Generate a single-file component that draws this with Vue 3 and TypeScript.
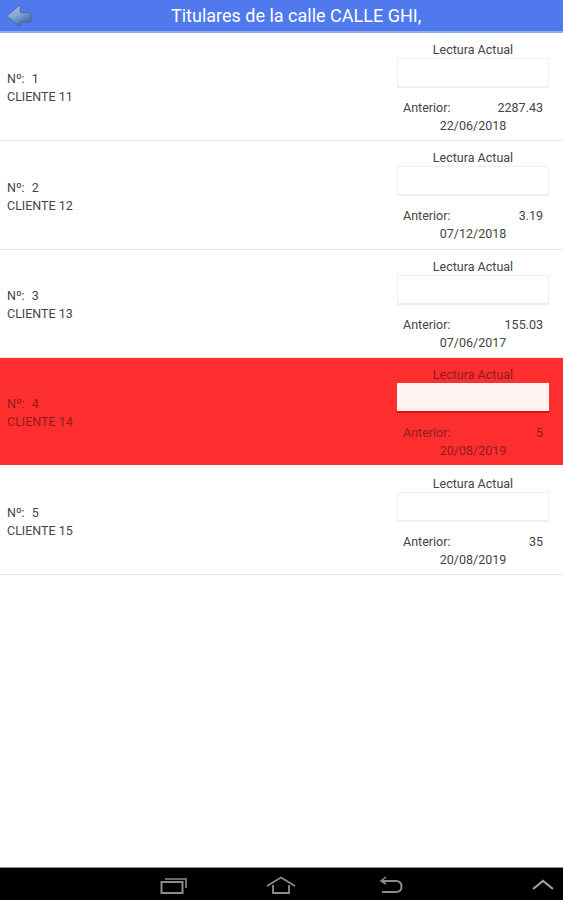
<script setup lang="ts">
interface Titular {
  numero: number;
  nombre: string;
  anterior: string;
  fecha: string;
  alerta?: boolean;
}

const titulares: Titular[] = [
  { numero: 1, nombre: "CLIENTE 11", anterior: "2287.43", fecha: "22/06/2018" },
  { numero: 2, nombre: "CLIENTE 12", anterior: "3.19", fecha: "07/12/2018" },
  { numero: 3, nombre: "CLIENTE 13", anterior: "155.03", fecha: "07/06/2017" },
  { numero: 4, nombre: "CLIENTE 14", anterior: "5", fecha: "20/08/2019", alerta: true },
  { numero: 5, nombre: "CLIENTE 15", anterior: "35", fecha: "20/08/2019" },
];
</script>

<template>
  <div class="pantalla">
    <header class="cabecera">
      <button class="volver" aria-label="Volver">
        <svg width="26" height="24" viewBox="0 0 26 24">
          <defs>
            <linearGradient id="flecha" x1="0" y1="0" x2="0.6" y2="1">
              <stop offset="0" stop-color="#a8c6dc" />
              <stop offset="0.5" stop-color="#86aad0" />
              <stop offset="1" stop-color="#3c66a4" />
            </linearGradient>
          </defs>
          <path d="M1 12 L14 1 L14.5 8.5 L25 9 Q25.5 13 25 18 L14.5 18 L14 23 Z" fill="url(#flecha)" stroke="#3f68a6" stroke-width="0.8" stroke-linejoin="round" />
        </svg>
      </button>
      <h1 class="titulo">Titulares de la calle CALLE GHI,</h1>
    </header>

    <main class="lista">
      <section
        v-for="t in titulares"
        :key="t.numero"
        class="fila"
        :class="{ 'fila--alerta': t.alerta }"
      >
        <div class="datos">
          <div class="numero"><span>Nº:</span><span>{{ t.numero }}</span></div>
          <div>{{ t.nombre }}</div>
        </div>
        <div class="lectura">
          <label class="etiqueta">Lectura Actual</label>
          <input class="campo" type="text" />
          <div class="anterior"><span>Anterior:</span><span>{{ t.anterior }}</span></div>
          <div class="fecha">{{ t.fecha }}</div>
        </div>
      </section>
    </main>

    <nav class="sistema">
      <svg class="ico" style="margin-left: 20px" width="28" height="18" viewBox="0 0 28 18" fill="none" stroke="#8c8c8c" stroke-width="2">
        <rect x="1.5" y="6" width="21" height="11" />
        <path d="M5 3 H26 V12" stroke-width="1.6" />
      </svg>
      <svg class="ico" style="margin-left: 78px" width="30" height="18" viewBox="0 0 30 18" fill="none" stroke="#8c8c8c" stroke-width="1.8">
        <path d="M1 10 L15 1.5 L29 10 M7 9 V17 H23 V9" />
      </svg>
      <svg class="ico" style="margin-left: 83px" width="24" height="18" viewBox="0 0 24 18" fill="none" stroke="#8c8c8c" stroke-width="2">
        <path d="M3 5 H17 Q22.5 5 22.5 10.5 Q22.5 16 17 16 H3" />
        <path d="M7 1 L2 5 L7 8" stroke-width="1.6" />
      </svg>
      <svg class="ico" style="margin-left: 129px" width="22" height="12" viewBox="0 0 22 12" fill="none" stroke="#a0a0a0" stroke-width="2.2">
        <path d="M1 10 L11 2 L21 10" />
      </svg>
    </nav>
  </div>
</template>

<style scoped>
.pantalla {
  width: 563px;
  height: 900px;
  display: flex;
  flex-direction: column;
  background: #fff;
  color: #444;
  font-family: Roboto, "Liberation Sans", sans-serif;
  font-size: 12.5px;
  overflow: hidden;
}

.cabecera {
  height: 33px;
  box-sizing: border-box;
  flex: none;
  display: flex;
  align-items: center;
  position: relative;
  background: #5179ee;
  border-bottom: 2px solid #8fabf5;
}

.volver {
  position: absolute;
  left: 6px;
  top: 4px;
  padding: 0;
  border: 0;
  background: none;
  line-height: 0;
}

.titulo {
  margin: 0 0 0 171px;
  font-size: 18px;
  font-weight: 400;
  color: #fff;
  white-space: nowrap;
}

.lista {
  flex: 1;
}

.fila {
  height: 108.4px;
  box-sizing: border-box;
  display: flex;
  justify-content: space-between;
  border-bottom: 1px solid #e8e8e8;
}

.fila--alerta {
  background: #ff2f2f;
  background-clip: padding-box;
  border-bottom: 2px solid #fff;
  color: #8e1c1c;
}

.datos {
  display: flex;
  flex-direction: column;
  justify-content: center;
  gap: 4px;
  padding-left: 7px;
  line-height: 14px;
  padding-top: 3px;
}

.numero {
  display: flex;
  gap: 7px;
}

.lectura {
  width: 152px;
  margin-right: 14px;
  padding-top: 10px;
  display: flex;
  flex-direction: column;
  align-items: center;
  line-height: 14px;
}

.etiqueta {
  height: 14px;
}

.campo {
  width: 152px;
  height: 30px;
  box-sizing: border-box;
  margin-top: 1px;
  background: #fff;
  border: 1px solid #efefef;
  border-bottom-width: 2px;
  outline: none;
}

.fila--alerta .campo {
  background: #fff4f4;
  border: 0;
  border-bottom: 2px solid #e01010;
}

.anterior {
  width: 140px;
  margin-top: 13px;
  display: flex;
  justify-content: space-between;
}

.fecha {
  margin-top: 4px;
}

.sistema {
  height: 33px;
  flex: none;
  box-sizing: border-box;
  display: flex;
  align-items: center;
  padding-left: 140px;
  background: #000;
  border-top: 1px solid #8a8a8a;
}

.ico {
  flex: none;
  margin-top: 2px;
}
</style>
